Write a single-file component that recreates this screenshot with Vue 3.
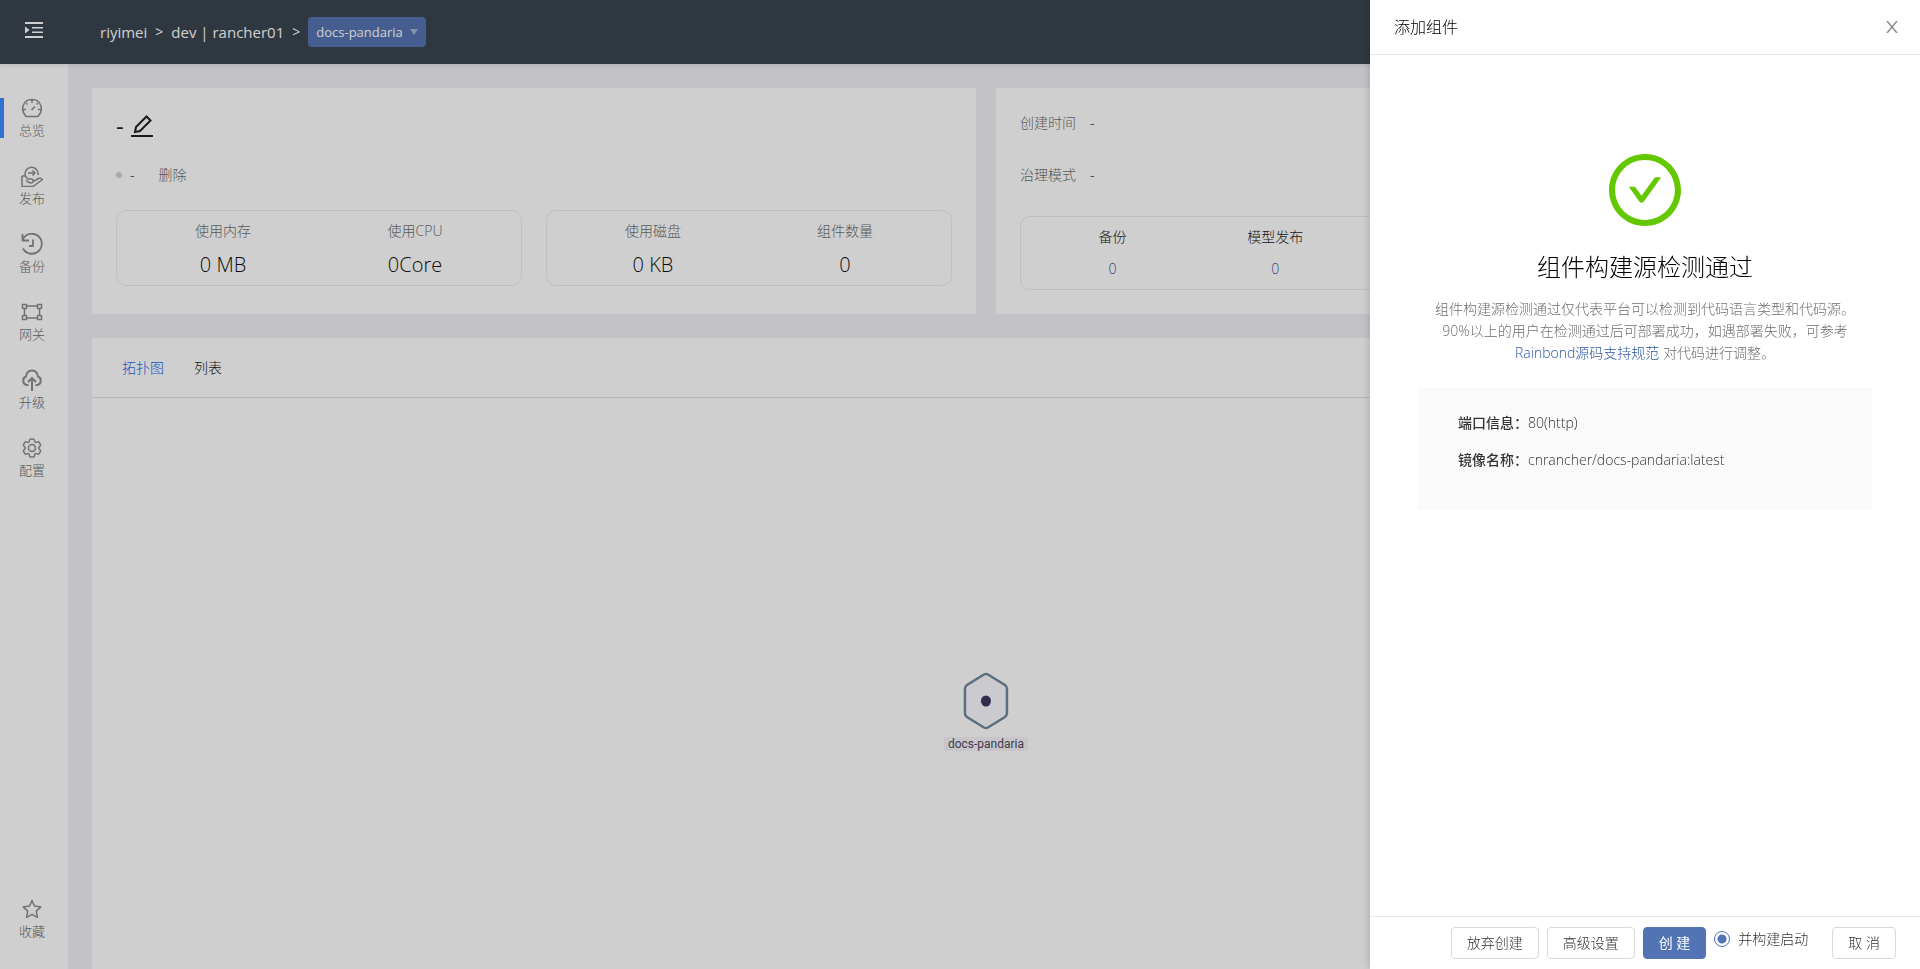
<template>
  <div class="layout">
    <header class="topbar">
      <button class="fold" type="button" aria-label="菜单">
        <svg width="18" height="16" viewBox="0 0 18 16">
          <path d="M0 0h18v2H0zM7 5h11v1.500H7zM7 9.500h11V11H7zM0 14h18v2H0zM0 4.500L4.500 8 0 11.500z" fill="currentColor" />
        </svg>
      </button>
      <nav class="crumbs">
        <a href="#">riyimei</a>
        <span class="sep">&gt;</span>
        <a href="#">dev | rancher01</a>
        <span class="sep">&gt;</span>
        <button class="app-select" type="button">
          docs-pandaria
          <span class="caret"></span>
        </button>
      </nav>
    </header>

    <div class="body">
      <aside class="sidebar">
        <a
          v-for="item in menu"
          :key="item.name"
          href="#"
          class="menu-item"
          :class="{ active: item.name === ativo, last: item.name === '收藏' }"
          @click.prevent="ativo = item.name"
        >
          <svg
            width="22"
            height="22"
            viewBox="0 0 22 22"
            fill="none"
            stroke="currentColor"
            :stroke-width="item.stroke || 1.5"
            stroke-linejoin="round"
          >
            <path :d="item.path" :transform="item.transform" />
          </svg>
          <span>{{ item.name }}</span>
        </a>
      </aside>

      <main class="content">
        <div class="row">
          <section class="card">
            <div class="app-name">
              <span>-</span>
              <button type="button" class="edit" aria-label="编辑">
                <svg width="22" height="22" viewBox="0 0 22 22" fill="none" stroke="currentColor" stroke-width="2">
                  <path d="M4 17l1-5L15.500 1.500l4 4L9 16z M0 21h22" />
                </svg>
              </button>
            </div>
            <div class="app-status">
              <span class="dot"></span>
              <span>-</span>
              <button type="button" class="link-gray">删除</button>
            </div>
            <div class="stats">
              <div v-for="(grupo, i) in stats" :key="i" class="box">
                <div v-for="s in grupo" :key="s.label" class="cell">
                  <p class="cell-label">{{ s.label }}</p>
                  <p class="cell-value">{{ s.value }}</p>
                </div>
              </div>
            </div>
          </section>

          <section class="card">
            <div v-for="info in infos" :key="info" class="info">
              <span class="info-label">{{ info }}</span>
              <span>-</span>
            </div>
            <div class="box counts">
              <div v-for="c in counts" :key="c" class="cell">
                <p class="count-label">{{ c }}</p>
                <a href="#" class="count-value">0</a>
              </div>
            </div>
          </section>
        </div>

        <section class="panel">
          <div class="tabs">
            <button type="button" class="tab on">拓扑图</button>
            <button type="button" class="tab">列表</button>
          </div>
          <div class="canvas">
            <div class="node">
              <svg width="46" height="58" viewBox="0 0 46 58">
                <path
                  d="M21 2.500Q23 1.500 25 2.500L42 13Q44 14.500 44 17V41Q44 43.500 42 45L25 55.500Q23 56.500 21 55.500L4 45Q2 43.500 2 41V17Q2 14.500 4 13Z"
                  fill="#fbfbff"
                  stroke="#72879a"
                  stroke-width="2.500"
                />
                <ellipse cx="23" cy="29" rx="5" ry="5.500" fill="#3c3862" />
              </svg>
              <span>docs-pandaria</span>
            </div>
          </div>
        </section>
      </main>
    </div>

    <div class="mask"></div>

    <section class="drawer" role="dialog" aria-labelledby="drawer-title">
      <div class="drawer-head">
        <h2 id="drawer-title">添加组件</h2>
        <button type="button" class="close" aria-label="关闭">
          <svg width="12" height="12" viewBox="0 0 12 12" stroke="currentColor" stroke-width="1.500">
            <path d="M1 0l10 12M11 0L1 12" />
          </svg>
        </button>
      </div>

      <div class="drawer-body">
        <svg class="ok" width="72" height="72" viewBox="64 64 896 896" fill="currentColor">
          <path d="M699 353h-46.900c-10.200 0-19.900 4.900-25.900 13.300L469 584.300l-71.200-98.800c-6-8.300-15.600-13.300-25.900-13.300H325c-6.500 0-10.300 7.400-6.500 12.700l124.600 172.800a31.800 31.800 0 0 0 51.700 0l210.600-292c3.900-5.300.1-12.700-6.400-12.700z" />
          <path d="M512 64C264.600 64 64 264.600 64 512s200.600 448 448 448 448-200.600 448-448S759.400 64 512 64zm0 820c-205.400 0-372-166.600-372-372s166.600-372 372-372 372 166.600 372 372-166.600 372-372 372z" />
        </svg>
        <h3>组件构建源检测通过</h3>
        <p class="desc">
          组件构建源检测通过仅代表平台可以检测到代码语言类型和代码源。<br />
          90%以上的用户在检测通过后可部署成功，如遇部署失败，可参考<br />
          <a href="#">Rainbond源码支持规范</a> 对代码进行调整。
        </p>
        <div class="result">
          <p v-for="r in resultado" :key="r.label">
            <strong>{{ r.label }}：</strong>{{ r.value }}
          </p>
        </div>
      </div>

      <div class="drawer-foot">
        <button type="button" class="btn">放弃创建</button>
        <button type="button" class="btn">高级设置</button>
        <button type="button" class="btn primary">创 建</button>
        <label class="radio" for="construir">
          <input id="construir" v-model="construir" type="radio" name="construir" value="sim" />
          并构建启动
        </label>
        <button type="button" class="btn">取 消</button>
      </div>
    </section>
  </div>
</template>

<script setup>
import { ref } from "vue";

const ativo = ref("总览");
const construir = ref("sim");

/* Itens do menu lateral */
const menu = [
  {
    name: "总览",
    path: "M5 19.500C-1 13 1.500 2.500 11 2.500S23 13 17 19.500ZM11 3v3M5 6l1.500 1.500M17 6l-1.500 1.500M2 12.500h3M17 12.500h3M10.500 13L14 9.500",
  },
  {
    name: "发布",
    path: "M4.500 11A6.500 6.500 0 1 1 17 10M7 8h7M11.500 5.500L14 8l-2.500 2.500M1 11v10.500h11L21.500 14.500Q20 12.500 17.500 13.500L12 16.500M1 11h3l3 3h3Q12.500 14 12 16.500T7 17l-2-2",
  },
  {
    name: "备份",
    path: "M2 6A10 10 0 1 1 2 15.500M1.500 1v6.500H8M12 6.500V13H8",
    stroke: 1.8,
  },
  {
    name: "网关",
    path: "M1.500 3.500h4v4h-4zM16.500 3.500h4v4h-4zM1.500 14.500h4v4h-4zM16.500 14.500h4v4h-4zM5.500 5h11M5.500 17h11M3.500 7.500v7M18.500 7.500v7",
  },
  {
    name: "升级",
    path: "M7.500 16H5.500A4.500 4.500 0 0 1 5 7.500C6 -.5 16 -.5 17 7.500A4.500 4.500 0 0 1 16.500 16H14.500M11 22V9.500M7 13l4-4 4 4",
    stroke: 2,
  },
  {
    name: "配置",
    path: "M9.594 3.940c.09-.542.56-.94 1.110-.94h2.593c.55 0 1.020.398 1.110.940l.213 1.281c.063.374.313.686.645.870.074.040.147.083.220.127.325.196.720.257 1.075.124l1.217-.456a1.125 1.125 0 0 1 1.370.490l1.296 2.247a1.125 1.125 0 0 1-.260 1.431l-1.003.827c-.293.241-.438.613-.430.992a7.723 7.723 0 0 1 0 .255c-.008.378.137.750.430.991l1.004.827c.424.350.534.955.260 1.430l-1.298 2.247a1.125 1.125 0 0 1-1.369.491l-1.217-.456c-.355-.133-.750-.072-1.076.124a6.470 6.470 0 0 1-.220.128c-.331.183-.581.495-.644.869l-.213 1.281c-.090.543-.560.940-1.110.940h-2.594c-.550 0-1.019-.398-1.110-.940l-.213-1.281c-.062-.374-.312-.686-.644-.870a6.520 6.520 0 0 1-.220-.127c-.325-.196-.720-.257-1.076-.124l-1.217.456a1.125 1.125 0 0 1-1.369-.490l-1.297-2.247a1.125 1.125 0 0 1 .260-1.431l1.004-.827c.292-.240.437-.613.430-.991a6.932 6.932 0 0 1 0-.255c.007-.380-.138-.751-.430-.992l-1.004-.827a1.125 1.125 0 0 1-.260-1.430l1.297-2.247a1.125 1.125 0 0 1 1.370-.491l1.216.456c.356.133.751.072 1.076-.124.072-.044.146-.086.220-.128.332-.183.582-.495.644-.869l.214-1.280ZM15.500 12a3.500 3.500 0 1 1-7 0a3.500 3.500 0 0 1 7 0Z",
    transform: "translate(-1 -1)",
  },
  {
    name: "收藏",
    path: "M11 2.500l2.600 5.600 6.200.8-4.500 4.200 1.100 6.200L11 16.300l-5.400 3 1.100-6.200L2.200 8.900l6.200-.8Z",
  },
];

const stats = [
  [
    { label: "使用内存", value: "0 MB" },
    { label: "使用CPU", value: "0Core" },
  ],
  [
    { label: "使用磁盘", value: "0 KB" },
    { label: "组件数量", value: "0" },
  ],
];

const infos = ["创建时间", "治理模式"];
const counts = ["备份", "模型发布"];

const resultado = [
  { label: "端口信息", value: "80(http)" },
  { label: "镜像名称", value: "cnrancher/docs-pandaria:latest" },
];
</script>

<style>
body {
  margin: 0;
  overflow: hidden;
}
</style>

<style scoped>
.layout {
  display: flex;
  flex-direction: column;
  min-height: 100vh;
  background: #f0f1f6;
  color: #1c1c1c;
  font-family: "Open Sans", "Noto Sans CJK SC", sans-serif;
  font-size: 14px;
  font-weight: 300;
  line-height: 22px;
}
* {
  box-sizing: border-box;
}
p,
h2,
h3 {
  margin: 0;
  font-weight: 300;
}
a {
  text-decoration: none;
}
button {
  padding: 0;
  border: 0;
  background: none;
  color: inherit;
  font: inherit;
  cursor: pointer;
}
svg {
  display: block;
}

/* Barra superior */
.topbar {
  display: flex;
  height: 64px;
  align-items: center;
  padding: 0 25px;
  background: #3a4650;
  color: #fff;
  box-shadow: 0 1px 4px rgba(0, 21, 41, 0.12);
  z-index: 1;
}
.fold {
  width: 75px;
  padding-bottom: 4px;
}
.crumbs {
  display: flex;
  align-items: center;
  font-size: 15px;
  font-weight: 400;
}
.crumbs a {
  color: #fff;
}
.sep {
  margin: 0 8px;
  font-size: 14px;
}
.app-select {
  display: flex;
  height: 30px;
  align-items: center;
  gap: 7px;
  padding: 0 8px;
  border-radius: 4px;
  background: #5573b1;
  font-size: 13px;
}
.caret {
  border: 4px solid transparent;
  border-top: 6px solid #a5b3d3;
  border-bottom: 0;
}

/* Menu lateral */
.body {
  display: flex;
  flex: 1;
}
.sidebar {
  display: flex;
  flex-direction: column;
  width: 68px;
  padding: 20px 0 16px;
  background: #fff;
}
.menu-item {
  display: flex;
  flex-direction: column;
  height: 68px;
  align-items: center;
  padding: 13px 4px 0 0;
  color: #8a8d90;
  font-size: 13px;
}
.menu-item span {
  color: #6c6f72;
}
.menu-item.active {
  background: linear-gradient(#3b8cff, #3b8cff) 0 14px / 4px 40px no-repeat;
}
.menu-item.last {
  margin-top: auto;
}

/* Conteúdo */
.content {
  display: flex;
  flex: 1;
  flex-direction: column;
  gap: 24px;
  padding: 24px 40px 0 24px;
}
.row {
  display: flex;
  gap: 20px;
}
.card {
  flex: 1;
  padding: 24px;
  background: #fff;
}
.app-name {
  display: flex;
  align-items: center;
  gap: 7px;
  height: 28px;
  color: #222;
  font-size: 24px;
  font-weight: 400;
}
.app-status {
  display: flex;
  align-items: center;
  margin: 24px 0;
}
.dot {
  width: 6px;
  height: 6px;
  margin-right: 8px;
  border-radius: 50%;
  background: #d0d0d0;
}
.link-gray {
  margin-left: 24px;
  color: #707070;
}
.stats {
  display: flex;
  gap: 24px;
}
.box {
  display: flex;
  flex: 1;
  padding: 9px 10px;
  border: 1px solid #ececec;
  border-radius: 10px;
}
.stats .box {
  padding-bottom: 5px;
}
.cell {
  flex: 1;
  text-align: center;
}
.cell-label {
  color: #707070;
}
.cell-value {
  margin-top: 8px;
  color: #111;
  font-size: 20px;
  line-height: 30px;
}
.info {
  display: flex;
  gap: 14px;
  margin-bottom: 30px;
}
.info-label {
  color: #707070;
}
.counts {
  display: grid;
  grid-template-columns: repeat(5, 1fr);
}
.count-label {
  margin-bottom: 10px;
}
.count-value {
  color: #33559f;
}

/* Topologia */
.panel {
  flex: 1;
  background: #fff;
}
.tabs {
  display: flex;
  height: 60px;
  align-items: center;
  gap: 30px;
  padding: 0 30px;
  border-bottom: 1px solid #e2e2e2;
}
.tab.on {
  color: #1a6df0;
}
.canvas {
  position: relative;
}
.node {
  position: absolute;
  top: 274px;
  left: 50%;
  display: flex;
  flex-direction: column;
  align-items: center;
  gap: 7px;
  transform: translateX(-50%);
  font-family: Roboto, sans-serif;
  font-size: 12px;
  font-weight: 400;
  line-height: 14px;
}
.node span {
  padding: 0 4px;
  border-radius: 2px;
  background: #f5f3f9;
  color: #4e4a5e;
}

.mask {
  position: fixed;
  inset: 0;
  z-index: 2;
  background: rgba(0, 0, 0, 0.19);
}

/* Gaveta */
.drawer {
  position: fixed;
  top: 0;
  right: 0;
  bottom: 0;
  z-index: 3;
  display: flex;
  flex-direction: column;
  width: 550px;
  max-width: 100%;
  background: #fff;
  box-shadow: -2px 0 8px rgba(0, 0, 0, 0.15);
  color: #333;
}
.drawer-head {
  display: flex;
  align-items: center;
  justify-content: space-between;
  height: 55px;
  padding: 0 22px 0 24px;
  border-bottom: 1px solid #e8e8e8;
}
.drawer-head h2 {
  color: #000;
  font-size: 16px;
}
.close {
  color: #8c8c8c;
}
.drawer-body {
  flex: 1;
  padding: 99px 48px 24px;
  text-align: center;
}
.ok {
  margin: 0 auto 24px;
  color: #64c800;
}
.drawer-body h3 {
  margin-bottom: 14px;
  color: #000;
  font-size: 24px;
  line-height: 34px;
}
.desc {
  color: #6e6e6e;
}
.desc a {
  color: #2c56a2;
}
.result {
  margin-top: 24px;
  padding: 24px 40px;
  background: #fafafa;
  text-align: left;
  line-height: 21px;
}
.result p {
  margin-bottom: 16px;
}
.result strong {
  font-weight: 500;
}
.drawer-foot {
  display: flex;
  justify-content: flex-end;
  gap: 8px;
  padding: 10px 24px;
  border-top: 1px solid #e8e8e8;
}
.btn {
  height: 32px;
  padding: 0 15px;
  border: 1px solid #d9d9d9;
  border-radius: 4px;
  background: #fff;
}
.btn.primary {
  border-color: #5274b4;
  background: #5274b4;
  color: #fff;
  font-weight: 400;
}
.radio {
  display: flex;
  height: 24px;
  align-items: center;
  gap: 8px;
  margin-right: 16px;
}
.radio input {
  width: 16px;
  height: 16px;
  margin: 0;
  border: 1px solid #5274b4;
  border-radius: 50%;
  appearance: none;
  background: radial-gradient(circle, #5274b4 4px, #fff 5px);
}
</style>
